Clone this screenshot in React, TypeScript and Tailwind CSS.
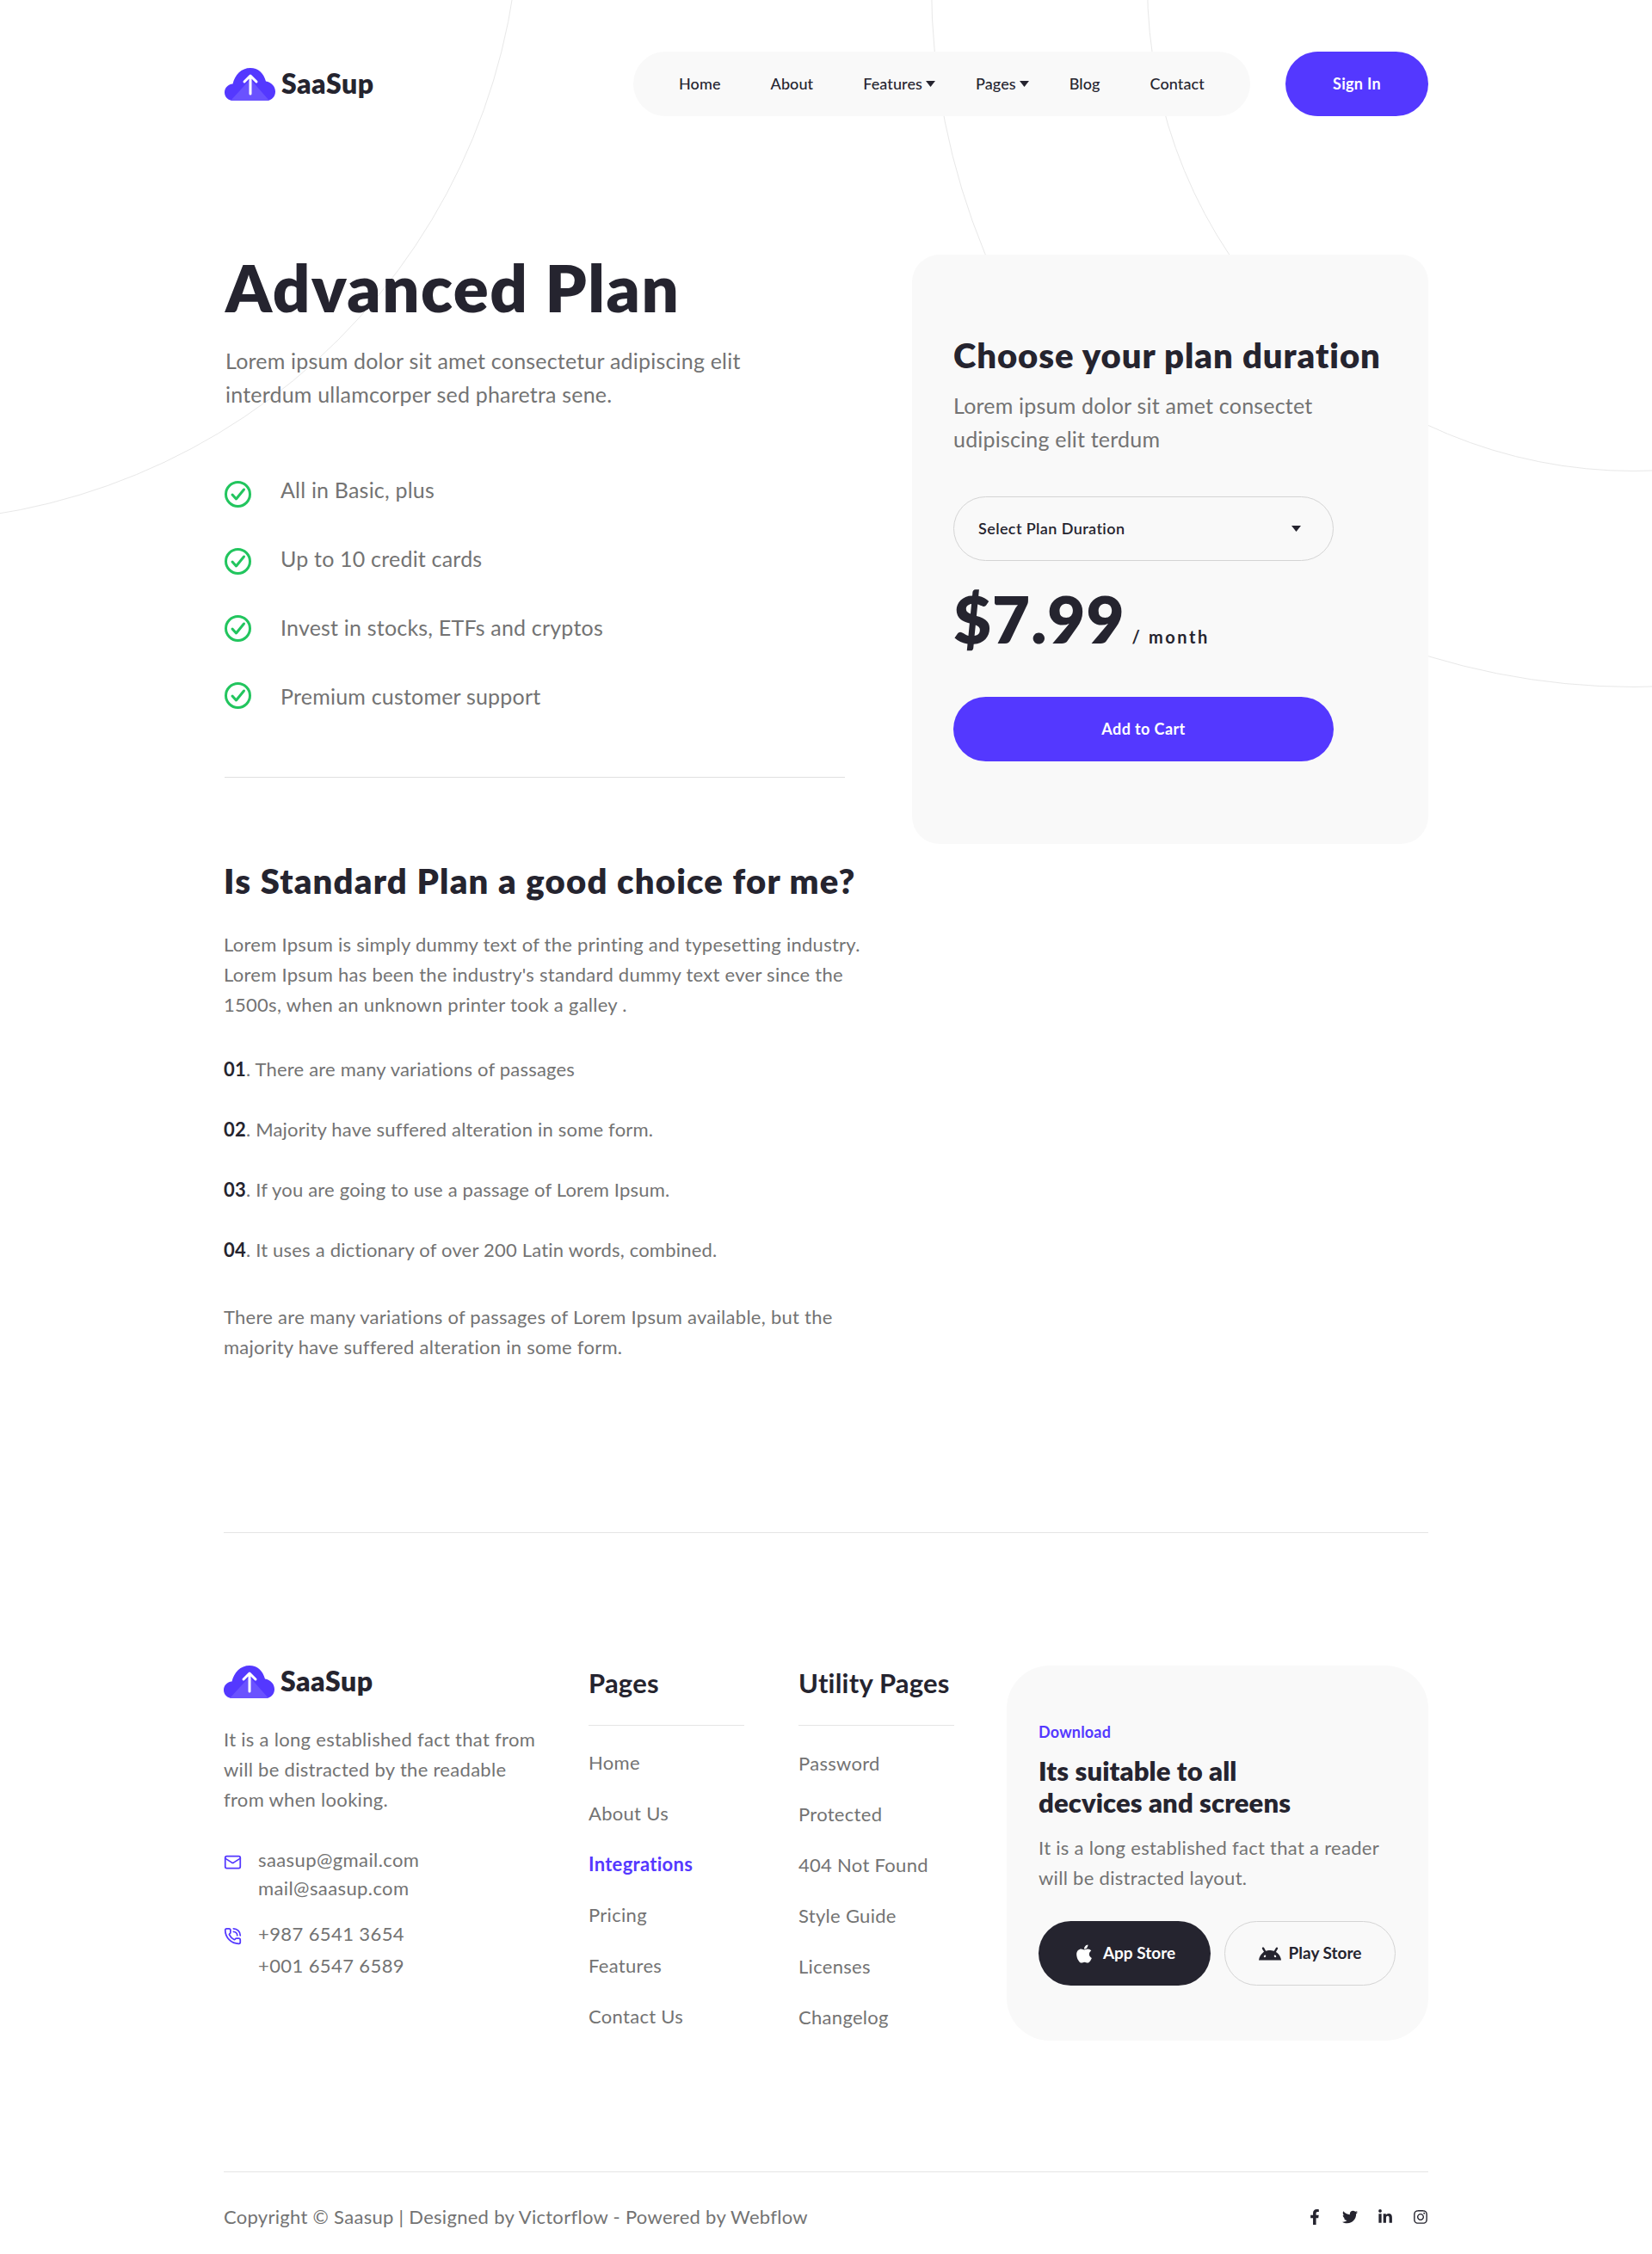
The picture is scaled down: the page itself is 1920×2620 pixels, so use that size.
import { FaApple, FaFacebookF, FaInstagram, FaLinkedinIn, FaTwitter } from "react-icons/fa";
import { SiAndroid } from "react-icons/si";
import { Mail, PhoneCall } from "lucide-react";

const navItems = [
  { label: "Home", caret: false },
  { label: "About", caret: false },
  { label: "Features", caret: true },
  { label: "Pages", caret: true },
  { label: "Blog", caret: false },
  { label: "Contact", caret: false },
];

const perks = ["All in Basic, plus", "Up to 10 credit cards", "Invest in stocks, ETFs and cryptos", "Premium customer support"];

const steps = [
  { n: "01", text: "There are many variations of passages" },
  { n: "02", text: "Majority have suffered alteration in some form." },
  { n: "03", text: "If you are going to use a passage of Lorem Ipsum." },
  { n: "04", text: "It uses a dictionary of over 200 Latin words, combined." },
];

const pages = ["Home", "About Us", "Integrations", "Pricing", "Features", "Contact Us"];
const utilityPages = ["Password", "Protected", "404 Not Found", "Style Guide", "Licenses", "Changelog"];

function Logo() {
  return (
    <div className="flex items-center gap-[7px]">
      <svg className="w-[59px] h-[38px]" viewBox="0 0 59 38" fill="none">
        <path d="M10 38C4.500 38 0 34 0 28.500 0 23 4 19 9.500 18.500 12 8 19.500 0 30 0c9 0 15 5.500 18 15.500C54.500 16.500 59 21.500 59 27.500 59 33.500 54.500 38 48.500 38H10Z" fill="#5438ff" />
        <path d="M7 38 30 13l22 25H7Z" fill="#6a52ff" />
        <path d="M30 30V10M23 16l7-7 7 7" stroke="#fff" strokeWidth="3" strokeLinecap="round" strokeLinejoin="round" />
      </svg>
      <span className="text-[32px] leading-none font-extrabold tracking-[0.5px] text-[#25242f] pb-0.5">SaaSup</span>
    </div>
  );
}

function CheckIcon() {
  return (
    <svg className="w-[31px] h-[31px]" viewBox="0 0 31 31" fill="none">
      <circle cx="15.500" cy="15.500" r="14" stroke="#22c55e" strokeWidth="3" />
      <path d="M9 16l4.500 5L22.500 10" stroke="#22c55e" strokeWidth="3" strokeLinecap="round" strokeLinejoin="round" />
    </svg>
  );
}

function Caret() {
  return (
    <svg className="w-[11px] h-[7px]" viewBox="0 0 11 7">
      <path d="M0 0h11L5.500 7z" fill="#25242f" />
    </svg>
  );
}

export default function App() {
  return (
    <div className="relative w-[1920px] h-[2620px] overflow-hidden bg-white text-[#737373] font-['Lato',sans-serif]">
      {/* background rings */}
      <div className="absolute left-[-840px] top-[-838px] w-[1445px] h-[1445px] rounded-full border border-[#e8e8e8]" />
      <div className="absolute left-[1333px] top-[-584px] w-[1132px] h-[1132px] rounded-full border border-[#e8e8e8]" />
      <div className="absolute left-[1082px] top-[-835px] w-[1634px] h-[1634px] rounded-full border border-[#e8e8e8]" />

      <div className="relative w-[1400px] mx-auto">
        <header className="pt-[60px] flex items-center justify-between">
          <div className="ml-px">
            <Logo />
          </div>
          <div className="flex items-center gap-[41px] ml-auto">
            <nav className="w-[717px] h-[75px] pl-[53px] rounded-[38px] bg-[#f9f9f9] flex items-center gap-[58px] text-[18px] font-medium tracking-[0.1px] text-[#25242f]">
              {navItems.map((item) => (
                <div key={item.label} className={item.caret ? "flex items-center gap-[4px] -mr-[11px]" : "flex items-center gap-[4px]"}>
                  {item.label}
                  {item.caret && <Caret />}
                </div>
              ))}
            </nav>
            <button className="w-[166px] h-[75px] rounded-[38px] bg-[#5438ff] text-white text-[18px] font-bold tracking-[0.3px]">Sign In</button>
          </div>
        </header>

        <main className="mt-[161px] flex items-start justify-between">
          <div className="w-[740px]">
            <div className="ml-px">
              <h1 className="-mt-[10px] pl-px text-[76px] leading-[96px] font-extrabold tracking-[1.5px] text-[#25242f]">Advanced Plan</h1>
              <p className="mt-[18px] pl-px text-[25px] leading-[39px] tracking-[0.2px]">
                Lorem ipsum dolor sit amet consectetur adipiscing elit
                <br />
                interdum ullamcorper sed pharetra sene.
              </p>
              <div className="mt-[71px] flex gap-[34px]">
                <div className="flex flex-col gap-[47px] pt-[10px]">
                  {perks.map((perk) => (
                    <CheckIcon key={perk} />
                  ))}
                </div>
                <div className="flex flex-col gap-[40px]">
                  {perks.map((perk) => (
                    <div key={perk} className="text-[25px] leading-[40px] tracking-[0.2px]">
                      {perk}
                    </div>
                  ))}
                </div>
              </div>
              <div className="mt-[74px] w-[721px] border-t border-[#e0e0e0]" />
            </div>

            <h2 className="mt-[96px] text-[40px] leading-[48px] font-extrabold tracking-[1.2px] text-[#25242f] whitespace-nowrap">Is Standard Plan a good choice for me?</h2>
            <p className="mt-[32px] text-[22px] leading-[35px] tracking-[0.27px]">
              Lorem Ipsum is simply dummy text of the printing and typesetting industry.
              <br />
              Lorem Ipsum has been the industry's standard dummy text ever since the
              <br />
              1500s, when an unknown printer took a galley .
            </p>
            <div className="mt-[40px] flex flex-col gap-[35px]">
              {steps.map((s) => (
                <div key={s.n} className="text-[22px] leading-[35px] tracking-[0.2px]">
                  <span className="font-bold text-[#25242f]">{s.n}</span>. {s.text}
                </div>
              ))}
            </div>
            <p className="mt-[43px] text-[22px] leading-[35px] tracking-[0.27px]">
              There are many variations of passages of Lorem Ipsum available, but the
              <br />
              majority have suffered alteration in some form.
            </p>
          </div>

          <aside className="w-[600px] h-[685px] rounded-[32px] bg-[#f9f9f9] px-[48px] pt-[93px]">
            <h3 className="text-[40px] leading-[48px] font-extrabold tracking-[0.95px] text-[#25242f] whitespace-nowrap">Choose your plan duration</h3>
            <p className="mt-[15px] text-[25px] leading-[39px] tracking-[0.2px]">
              Lorem ipsum dolor sit amet consectet
              <br />
              udipiscing elit terdum
            </p>
            <div className="mt-[47px] w-[442px] h-[75px] rounded-[38px] border border-[#d4d4d4] pl-[28px] pr-[37px] flex items-center justify-between text-[18px] font-semibold tracking-[0.4px] text-[#25242f]">
              Select Plan Duration
              <Caret />
            </div>
            <div className="mt-[17px] flex items-baseline gap-[8px] text-[#25242f] font-extrabold">
              <span className="text-[76px] leading-[100px] tracking-[1px]">$7.99</span>
              <span className="text-[20px] tracking-[2.6px] font-bold">/ month</span>
            </div>
            <button className="mt-[41px] w-[442px] h-[75px] rounded-[38px] bg-[#5438ff] text-white text-[18px] font-bold tracking-[0.4px]">Add to Cart</button>
          </aside>
        </main>

        <div className="mt-[198px] border-t border-[#e5e5e5]" />

        <footer className="mt-[154px] flex items-start">
          <div className="w-[424px]">
            <Logo />
            <p className="mt-[30px] text-[22px] leading-[35px] tracking-[0.3px]">
              It is a long established fact that from
              <br />
              will be distracted by the readable
              <br />
              from when looking.
            </p>
            <div className="mt-[36px] flex gap-[19px]">
              <Mail className="w-[21px] h-[21px] mt-[9px] text-[#5438ff]" strokeWidth={2} />
              <div className="text-[22px] leading-[33px] tracking-[0.4px]">
                saasup@gmail.com
                <br />
                mail@saasup.com
              </div>
            </div>
            <div className="mt-[18px] flex gap-[19px]">
              <PhoneCall className="w-[21px] h-[21px] mt-[11px] text-[#5438ff]" strokeWidth={2} />
              <div className="text-[22px] leading-[37px] tracking-[0.4px]">
                +987 6541 3654
                <br />
                +001 6547 6589
              </div>
            </div>
          </div>

          <div className="w-[244px]">
            <div className="w-[181px]">
              <div className="text-[31px] leading-[40px] font-bold tracking-[0.2px] text-[#25242f]">Pages</div>
              <div className="mt-[29px] border-t border-[#e5e5e5]" />
              <div className="mt-[28px] flex flex-col gap-[29px]">
                {pages.map((p) => (
                  <div key={p} className={p === "Integrations" ? "text-[22px] leading-[30px] font-bold tracking-[0.3px] text-[#5438ff]" : "text-[22px] leading-[30px] tracking-[0.3px]"}>
                    {p}
                  </div>
                ))}
              </div>
            </div>
          </div>

          <div className="w-[242px]">
            <div className="w-[181px]">
              <div className="text-[31px] leading-[40px] font-bold tracking-[0.2px] text-[#25242f] whitespace-nowrap">Utility Pages</div>
              <div className="mt-[29px] border-t border-[#e5e5e5]" />
              <div className="mt-[29px] flex flex-col gap-[29px]">
                {utilityPages.map((p) => (
                  <div key={p} className="text-[22px] leading-[30px] tracking-[0.3px]">
                    {p}
                  </div>
                ))}
              </div>
            </div>
          </div>

          <div className="w-[490px] h-[436px] rounded-[50px] bg-[#f9f9f9] pl-[37px] pt-[64px]">
            <div className="text-[18px] leading-[26px] font-bold tracking-[0.2px] text-[#5438ff]">Download</div>
            <div className="mt-[14px] text-[31px] leading-[37px] font-extrabold tracking-[0.1px] text-[#25242f] whitespace-nowrap">
              Its suitable to all
              <br />
              decvices and screens
            </div>
            <p className="mt-[16px] text-[22px] leading-[35px] tracking-[0.3px]">
              It is a long established fact that a reader
              <br />
              will be distracted layout.
            </p>
            <div className="mt-[33px] flex gap-[16px]">
              <button className="w-[200px] h-[75px] rounded-[38px] bg-[#25242f] text-white text-[19px] font-bold flex items-center justify-center gap-[10px]">
                <FaApple className="w-[24px] h-[24px]" />
                App Store
              </button>
              <button className="w-[199px] h-[75px] rounded-[38px] border border-[#d4d4d4] text-[#25242f] text-[19px] font-bold flex items-center justify-center gap-[9px]">
                <SiAndroid className="w-[26px] h-[26px]" />
                Play Store
              </button>
            </div>
          </div>
        </footer>

        <div className="mt-[152px] border-t border-[#e5e5e5]" />
        <div className="mt-[34px] flex items-center justify-between">
          <div className="text-[22px] leading-[36px] tracking-[0.29px]">Copyright © Saasup | Designed by Victorflow - Powered by Webflow</div>
          <div className="flex items-center gap-[23px] text-[#25242f]">
            <FaFacebookF className="w-[18px] h-[18px]" />
            <FaTwitter className="w-[18px] h-[18px]" />
            <FaLinkedinIn className="w-[18px] h-[18px]" />
            <FaInstagram className="w-[18px] h-[18px]" />
          </div>
        </div>
      </div>
    </div>
  );
}
